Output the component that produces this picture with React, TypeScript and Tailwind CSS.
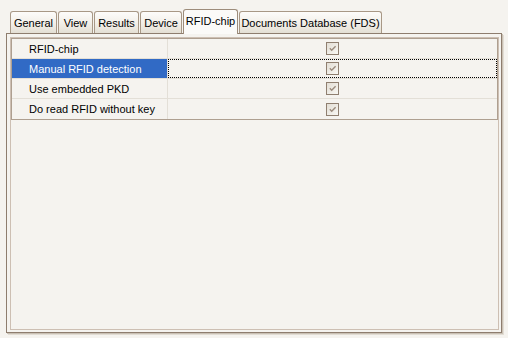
import { useState } from 'react';

const tabs = [
    { label: 'General', w: 'w-[47px]' },
    { label: 'View', w: 'w-[35px]' },
    { label: 'Results', w: 'w-[45px]' },
    { label: 'Device', w: 'w-[42px]' },
    { label: 'RFID-chip', w: 'w-[55px]' },
    { label: 'Documents Database (FDS)', w: 'w-[143px]' },
];

const rows = ['RFID-chip', 'Manual RFID detection', 'Use embedded PKD', 'Do read RFID without key'];

function CheckBox() {
    return (
        <span className="block w-[13px] h-[13px] border border-[#8f7f70] bg-gradient-to-br from-[#e3ded5] to-[#f8f7f3]">
            <svg width="11" height="11" viewBox="0 0 11 11" className="block">
                <path d="M2.8 5.3 L4.7 7.2 L8.6 3.3" fill="none" stroke="#9a8a7c" strokeWidth="1.4" />
            </svg>
        </span>
    );
}

export default function App() {
    const [activeTab, setActiveTab] = useState(4);
    const [selected, setSelected] = useState(1);

    return (
        <div className="w-[508px] h-[338px] bg-[#f5f3ef] text-[11px] text-black font-['Liberation_Sans',Arial,sans-serif] select-none">
            {/* tab strip */}
            <div className="flex items-end gap-[1px] pl-[10px] pt-[9px] h-[33px] relative z-10">
                {tabs.map((t, i) => {
                    const active = i === activeTab;
                    return (
                        <button
                            key={t.label}
                            onClick={() => setActiveTab(i)}
                            className={
                                active
                                    ? `${t.w} h-[25px] -mb-[1px] rounded-t-[3px] border border-b-0 border-[#9d8c7b] bg-[#fbfaf8] pb-[1px] text-center leading-none`
                                    : `${t.w} h-[22px] rounded-t-[3px] border border-b-0 border-[#a89886] bg-gradient-to-b from-[#fdfcfa] via-[#f3f0ea] to-[#e4dfd4] pt-[2px] text-center leading-none`
                            }
                        >
                            {t.label}
                        </button>
                    );
                })}
            </div>

            {/* panel */}
            <div className="ml-[6px] w-[496px] h-[300px] border border-[#8e7d6e] bg-[#f5f3ef] pt-[3px] pl-[3px] pr-[2px] pb-[2px] shadow-[1px_1px_0_#c9c0b4,2px_2px_0_#e2ddd4]">
                <div className="h-full border border-[#cdbfb3]">
                    <div className="border border-[#ae9f90] bg-[#f5f3ef]">
                        {rows.map((label, i) => {
                            const sel = i === selected;
                            return (
                                <div
                                    key={label}
                                    onClick={() => setSelected(i)}
                                    className={`flex h-[20px] ${i < rows.length - 1 ? 'border-b border-[#e3dfd7]' : ''}`}
                                >
                                    <div
                                        className={`w-[156px] flex items-center pl-[17px] pt-[1px] border-r border-[#e3dfd7] ${
                                            sel ? 'bg-[#316ac5] text-white' : ''
                                        }`}
                                    >
                                        {label}
                                    </div>
                                    <div
                                        className={`flex-1 flex items-center justify-center ${
                                            sel ? 'border border-dotted border-black' : ''
                                        }`}
                                    >
                                        <CheckBox />
                                    </div>
                                </div>
                            );
                        })}
                    </div>
                </div>
            </div>
        </div>
    );
}
